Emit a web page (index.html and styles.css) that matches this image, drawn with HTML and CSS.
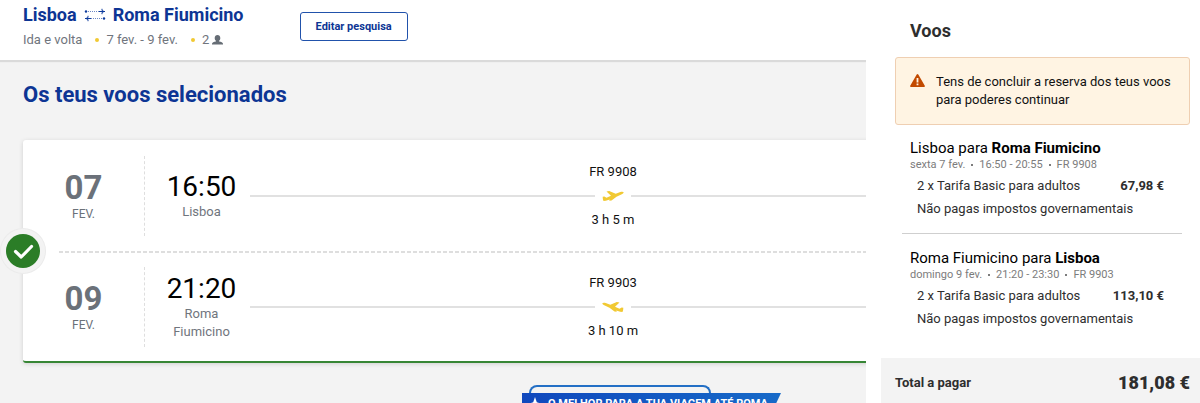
FILE: index.html
```html
<!DOCTYPE html>
<html lang="pt">
<head>
<meta charset="utf-8">
<meta name="viewport" content="width=device-width, initial-scale=1">
<title>Os teus voos selecionados</title>
<link rel="stylesheet" href="styles.css">
</head>
<body>
<div class="page">
  <main class="main">
    <header class="trip">
      <div>
        <h1 class="trip-route">
          <span>Lisboa</span>
          <svg class="trip-arrows" viewBox="0 0 22 14" aria-hidden="true">
            <g stroke="#0d3b9c" fill="none"><path stroke-opacity=".6" d="M4 3.500H15M7 10.500H18" stroke-dasharray="1 1"/><path d="M15 3.500h6M18 .8v1.700l2 1-2 1v1.700M7 10.500H1M4 7.800v1.700l-2 1 2 1v1.700"/></g>
            <circle cx="2" cy="3.500" r="1.200" fill="#0d3b9c"/><circle cx="20" cy="10.500" r="1.200" fill="#0d3b9c"/>
          </svg>
          <span>Roma Fiumicino</span>
        </h1>
        <div class="trip-facts">
          <span>Ida e volta</span>
          <span class="fact">7 fev. - 9 fev.</span>
          <span class="fact">2
            <svg class="person" viewBox="0 0 11 10" aria-label="passageiros"><path fill="#666d75" d="M5.500 0C3.900 0 2.700 1.200 2.700 2.900c0 1.300.5 2.200 1.200 2.800v.7C2 6.700 0 7.200 0 8.800V9.500h11V8.800c0-1.600-2-2.100-3.900-2.400v-.7c.7-.6 1.200-1.500 1.200-2.800C8.300 1.200 7.100 0 5.500 0Z"/></svg>
          </span>
        </div>
      </div>
      <button class="edit" type="button">Editar pesquisa</button>
    </header>

    <h2 class="section-title">Os teus voos selecionados</h2>

    <section class="card">
      <span class="badge"><svg viewBox="0 0 34 34" aria-hidden="true"><circle cx="17" cy="17" r="17" fill="#2b7d27"/><path d="M9.500 17.500l5.700 5.500L25.500 12.500" fill="none" stroke="#fff" stroke-width="3.200" stroke-linecap="round" stroke-linejoin="round"/></svg></span>
      <article class="leg">
        <div class="date"><span class="day">07</span><span class="month">FEV.</span></div>
        <div class="departure"><span class="time">16:50</span><span class="city">Lisboa</span></div>
        <div class="flight">
          <span>FR 9908</span>
          <span class="track"><svg class="plane" viewBox="0 0 22 12" aria-hidden="true"><path fill="#f1c933" d="M.7 6.700l1.600-.2 2.200 1.200L9 5.800 4.500 1.600l2.700-.6 6.500 2.700 4.600-1.600c1.500-.5 2.900-.5 3.300.2.300.8-.6 1.500-1.800 2L14.500 6.700 9.500 10.400l-2.300.4.500-1.200-3.900 1.200-2.200.2C1 10.100.7 8.300.7 6.700Z"/></svg></span>
          <span>3 h 5 m</span>
        </div>
      </article>
      <article class="leg">
        <div class="date"><span class="day">09</span><span class="month">FEV.</span></div>
        <div class="departure"><span class="time">21:20</span><span class="city">Roma Fiumicino</span></div>
        <div class="flight">
          <span>FR 9903</span>
          <span class="track"><svg class="plane" viewBox="0 0 22 12" aria-hidden="true"><path fill="#f1c933" transform="matrix(-1 0 0 1 22 0)" d="M.7 6.700l1.600-.2 2.200 1.200L9 5.800 4.500 1.600l2.700-.6 6.500 2.700 4.600-1.600c1.500-.5 2.900-.5 3.300.2.300.8-.6 1.500-1.800 2L14.500 6.700 9.500 10.400l-2.300.4.500-1.200-3.900 1.200-2.200.2C1 10.100.7 8.300.7 6.700Z"/></svg></span>
          <span>3 h 10 m</span>
        </div>
      </article>
    </section>

    <section class="offer">
      <div class="offer-tab"></div>
      <div class="offer-banner">
        <svg class="star" viewBox="0 0 14 14" aria-hidden="true"><path fill="#fff" d="M7 0l1.800 5.200L14 7 8.800 8.800 7 14 5.200 8.800 0 7l5.200-1.800Z"/></svg>
        <span>O MELHOR PARA A TUA VIAGEM ATÉ ROMA</span>
      </div>
    </section>
  </main>

  <aside class="basket">
    <h2 class="basket-title">Voos</h2>
    <div class="alert" role="alert">
      <svg class="warning" viewBox="0 0 15 13" aria-hidden="true"><path fill="#c24a00" d="M6.700.6c.4-.7 1.200-.7 1.600 0l6.500 11.200c.3.600 0 1.200-.8 1.200H1c-.8 0-1.100-.6-.8-1.200Z"/><path fill="#fff4e3" d="M6.600 4h1.800v4.500H6.600zM6.600 9.500h1.800v1.700H6.600z"/></svg>
      <p>Tens de concluir a reserva dos teus voos para poderes continuar</p>
    </div>
    <section class="item">
      <h3>Lisboa para <b>Roma Fiumicino</b></h3>
      <p class="meta"><span>sexta 7 fev.</span><i></i><span>16:50 - 20:55</span><i></i><span>FR 9908</span></p>
      <p class="fare"><span>2 x Tarifa Basic para adultos</span><b>67,98 €</b></p>
      <p class="tax">Não pagas impostos governamentais</p>
    </section>
    <hr class="rule">
    <section class="item">
      <h3>Roma Fiumicino para <b>Lisboa</b></h3>
      <p class="meta"><span>domingo 9 fev.</span><i></i><span>21:20 - 23:30</span><i></i><span>FR 9903</span></p>
      <p class="fare"><span>2 x Tarifa Basic para adultos</span><b>113,10 €</b></p>
      <p class="tax">Não pagas impostos governamentais</p>
    </section>
    <footer class="total"><span>Total a pagar</span><strong>181,08 €</strong></footer>
  </aside>
</div>
</body>
</html>
```

FILE: styles.css
```css
* { box-sizing: border-box; }
body { margin: 0; font: 13px/18px Roboto, "Liberation Sans", sans-serif; color: #2e2e2e; }
h1, h2, h3, p { margin: 0; font-weight: 400; }
svg { display: block; flex: none; }

.page { height: 100vh; overflow: hidden; background: #f3f3f3; }

/* Trip header */
.trip { display: flex; align-items: flex-start; gap: 56px; height: 60px; padding: 4px 23px; background: #fff; box-shadow: 0 2px 1px #dadada; }
.trip-route { display: flex; align-items: center; gap: 7px; font-size: 18px; line-height: 22px; font-weight: 700; color: #0d3594; }
.trip-arrows { width: 22px; height: 14px; }
.trip-facts { display: flex; gap: 13px; padding-top: 5px; color: #70757d; }
.fact { display: flex; align-items: center; gap: 3px; }
.fact::before { content: ""; width: 4px; height: 4px; margin-right: 4px; border-radius: 50%; background: #f1c933; }
.person { width: 11px; height: 10px; }
.edit { height: 29px; margin-top: 8px; padding: 0 15px; border: 1px solid #2152ab; border-radius: 3px; background: #fff; color: #0d3594; font: 700 11px/18px Roboto, sans-serif; }

.section-title { padding: 21px 23px 31px; font-size: 22px; line-height: 28px; font-weight: 700; color: #0d3594; }

/* Selected flights */
.card { position: relative; margin: 0 23px; border-bottom: 2px solid #378635; border-radius: 3px; background: #fff; box-shadow: 0 1px 4px #cfcfcf; }
.badge { position: absolute; left: -17px; top: 94px; border-radius: 50%; background: #f3f3f3; box-shadow: 0 0 0 5px #f3f3f3, 0 0 0 6px #ebebeb; }
.badge svg { width: 34px; height: 34px; }
.leg { display: flex; align-items: center; min-height: 111px; padding-right: 201px; }
.leg + .leg { min-height: 110px; border-top: 2px solid transparent; background: repeating-linear-gradient(90deg, #dedede 0 4px, transparent 4px 6px) 36px 0 / 100% 2px no-repeat border-box; }
.date, .departure, .flight { display: flex; flex-direction: column; align-items: center; text-align: center; }
.date { justify-content: center; width: 122px; height: 80px; border-right: 1px dashed #dedede; color: #6b7179; }
.day { font-size: 33px; line-height: 36px; font-weight: 700; }
.month { font-size: 12px; line-height: 16px; }
.departure { width: 105px; padding-left: 8px; color: #70757d; }
.time { font-size: 28px; line-height: 32px; color: #000; }
.flight { flex: 1; line-height: 24px; color: #111; }
.track { display: flex; align-items: center; gap: 7px; width: 100%; height: 24px; }
.track::before, .track::after { content: ""; flex: 1; height: 2px; background: #e1e1e1; }
.plane { width: 22px; height: 12px; }
.city { width: 80px; }

/* Offer banner */
.offer { width: 259px; margin: 22px 0 0 522px; }
.offer-tab { width: 182px; height: 8px; margin-left: 7px; border: 2px solid #236fc5; border-bottom: 0; border-radius: 8px 8px 0 0; }
.offer-banner { display: flex; align-items: center; gap: 6px; height: 22px; padding: 0 6px; background: linear-gradient(90deg, #1048bd, #176ac8); clip-path: polygon(0 0, 100% 0, 96% 100%, 0 100%); color: #fff; font-size: 11px; font-weight: 700; white-space: nowrap; }
.star { width: 14px; height: 14px; }

/* Basket drawer laid over the page */
.basket { position: fixed; top: 0; right: 0; bottom: 0; width: 334px; display: flex; flex-direction: column; background: #fff; }
.basket-title { padding: 20px 44px 15px; font-size: 18px; line-height: 22px; font-weight: 700; }
.alert { display: flex; gap: 11px; margin: 0 10px 14px 29px; padding: 15px 14px; border: 1px solid #efcfb2; border-radius: 3px; background: #fff4e3; color: #111; }
.warning { width: 15px; height: 13px; margin-top: 1px; }
.item { padding: 0 36px 0 44px; }
.item h3 { font-size: 15px; line-height: 18px; color: #000; }
.meta { display: flex; align-items: center; gap: 6px; font-size: 11px; line-height: 16px; color: #7c7c7c; }
.meta i { width: 2px; height: 2px; background: #7c7c7c; }
.fare { display: flex; justify-content: space-between; padding: 4px 0 0 7px; line-height: 18px; }
.tax { padding: 5px 0 0 7px; }
.rule { width: 280px; margin: 15px 0 15px 36px; border: 0; border-top: 1px solid #cfcfcf; }
.total { display: flex; align-items: center; justify-content: space-between; height: 45px; margin: auto 0 0 15px; padding: 5px 10px 0 14px; background: #f3f3f3; font-weight: 700; }
.total strong { font-size: 18px; }
```
